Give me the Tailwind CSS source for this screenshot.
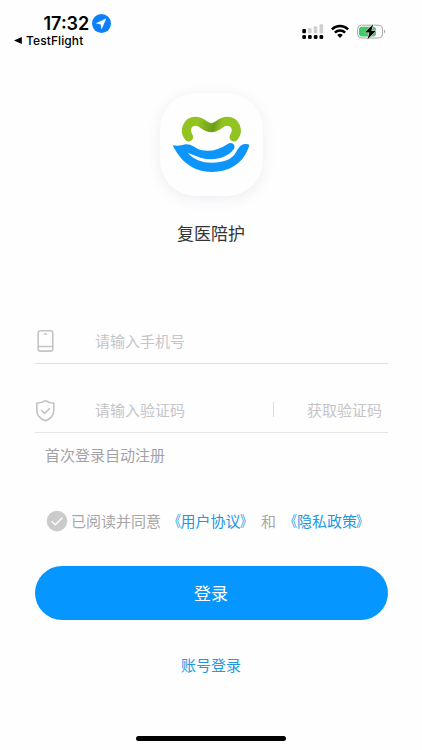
<!DOCTYPE html>
<html lang="zh-CN">
<head>
<meta charset="utf-8">
<meta name="viewport" content="width=device-width, initial-scale=1">
<title>复医陪护</title>
<script src="https://cdn.jsdelivr.net/npm/@tailwindcss/browser@4"></script>
</head>
<body class="bg-[#fefefe] font-['Noto_Sans_CJK_SC',sans-serif]">
<div class="w-[422px] h-[750px] flex flex-col overflow-hidden">
  <header class="h-[93px] shrink-0 flex justify-between items-start text-black font-['Inter',sans-serif]">
    <div class="pt-[13px] pl-[14px]">
      <div class="flex items-center gap-[3px] pl-[29.5px] h-[21px]">
        <span class="text-[18px] leading-[21px] font-semibold w-[45.5px] whitespace-nowrap">17:32</span>
        <svg class="size-[19px]" viewBox="0 0 19 19"><circle cx="9.5" cy="9.5" r="9.5" fill="#0c80fb"/><path d="M14 4.7 4.2 9.3l4.6.9.8 4.7z" fill="#fff" stroke="#fff" stroke-width=".3" stroke-linejoin="round"/></svg>
      </div>
      <div class="flex items-center gap-[4px] h-[13px]">
        <svg class="w-[8px] h-[7px]" viewBox="0 0 8 7"><path d="M0 3.5 7.8.1v6.8z"/></svg>
        <span class="text-[12px] leading-[13px] font-medium tracking-[0.1px]">TestFlight</span>
      </div>
    </div>
    <div class="flex pt-[24px] pr-[35px]">
      <svg class="w-[22px] h-[15px]" viewBox="0 0 22 15"><g fill="#d0d0d0"><rect x="6" y="4" width="3.6" height="5.5" rx="1"/><rect x="11.7" y="2.2" width="3.6" height="7.3" rx="1"/><rect x="17.5" y=".2" width="3.6" height="9.3" rx="1"/></g><rect x=".3" y="5" width="3.7" height="4.3" rx="1.1"/><rect x=".3" y="11" width="3.7" height="4" rx="1.3"/><rect x="6" y="11" width="3.7" height="4" rx="1.3"/><rect x="11.8" y="11" width="3.7" height="4" rx="1.3"/><rect x="17.5" y="11" width="3.7" height="4" rx="1.3"/></svg>
      <svg class="w-[18px] h-[14px] ml-[7px]" viewBox="0 0 18 14"><g fill="none" stroke="#000" stroke-width="2.5"><path d="M.9 5.3a11.6 11.6 0 0 1 16.2 0"/><path d="M3.9 8.6a7.3 7.3 0 0 1 10.2 0"/></g><path d="M9 13.9 6.2 11a4 4 0 0 1 5.6 0z"/></svg>
      <svg class="w-[30px] h-[16px] ml-[8px]" viewBox="0 0 30 16"><rect x=".6" y="1.2" width="25" height="12.8" rx="4" fill="#fff" stroke="#a7a7a7"/><path d="M5 2.7h11a3 3 0 0 1 3 3v3.8a3 3 0 0 1-3 3H5a3 3 0 0 1-3-3V5.7a3 3 0 0 1 3-3z" fill="#3fcc68"/><path d="M27 5.6q2.4 2 0 4z" fill="#a7a7a7"/><path d="M16.2.3 7.8 8.6h4.7l-2.1 7 8.6-8.9h-4.7z" stroke="#fff" stroke-width="1" paint-order="stroke"/></svg>
    </div>
  </header>

  <main class="flex flex-col px-[34.5px]">
    <div class="flex flex-col items-center">
      <div class="size-[103px] rounded-[36px] bg-[#fefefe] shadow-[0_3px_14px_rgba(50,70,110,0.09)]">
        <svg class="size-[103px]" viewBox="-15 -36 309 309" fill="none">
          <defs><linearGradient id="leaf" gradientUnits="userSpaceOnUse" x1="100" y1="45" x2="170" y2="62"><stop stop-color="#92c421"/><stop offset=".68" stop-color="#6c9c17"/><stop offset="1" stop-color="#92c421"/></linearGradient></defs>
          <path d="M71 96C56 77 67 49 92 49C113 49 118 68 139 68C160 68 165 49 186 49C212 49 222 77 207 96" stroke="url(#leaf)" stroke-width="27" stroke-linecap="round"/>
          <path d="M23 121Q42 124 62 118C80 117 88 128 104 134C132 142 160 136 188 117C201 108 215 122 206 133C192 152 165 164 134 163C108 161 88 151 68 143C85 163 110 173 140 173C175 173 200 165 213 142C222 125 230 117 240 117Q250 116 253 121C240 165 205 201 140 201C80 201 45 165 23 121Z" fill="#0d95fa"/>
        </svg>
      </div>
      <h1 class="mt-[24px] h-[26px] text-[17px] leading-[25px] text-[#333]">复医陪护</h1>
    </div>

    <div class="mt-[75px] h-[43px] border-b border-[#e0e0e2] flex items-start text-[15px] leading-[22px] text-[#c5c5c9]">
      <svg class="w-[21px] h-[24px] mt-[8px]" viewBox="0 0 21 24" fill="none" stroke="#c4c4c7" stroke-width="1.6"><rect x="3.2" y="1.7" width="14.6" height="20.4" rx="2.2"/><path d="M3.2 17.5h14.6M8.8 5h3.4"/></svg>
      <span class="ml-[39.5px] mt-[9px]">请输入手机号</span>
    </div>

    <div class="mt-[24px] h-[45px] border-b-[1.5px] border-[#e6e6e7] flex items-start text-[15px] leading-[22px] text-[#c5c5c9]">
      <svg class="w-[21px] h-[24px] mt-[11px]" viewBox="0 0 21 24" fill="none" stroke="#c2c2c5" stroke-width="1.6" stroke-linejoin="round"><path d="M10.4 1.6C7.7 3.4 5 4.2 1.8 4.3v7.2c0 5.2 3.1 8.2 8.6 10.2 5.4-2 8.4-5 8.4-10.2V4.3c-3.2-.1-5.8-.9-8.4-2.7Z"/><path d="m6.2 11 3.4 3.4 5.2-5.2"/></svg>
      <span class="ml-[39.5px] mt-[11px]">请输入验证码</span>
      <i class="ml-auto mt-[14px] w-px h-[15px] bg-[#dedee0]"></i>
      <span class="ml-[33px] mr-[5.5px] mt-[11px]">获取验证码</span>
    </div>
    <p class="mt-[11px] ml-[10.5px] text-[15px] leading-[22px] text-[#a2a2a6]">首次登录自动注册</p>

    <div class="mt-[44px] ml-[11.5px] h-[22px] flex items-center text-[15px] leading-[22px] text-[#a7a7a7] whitespace-nowrap">
      <svg class="size-[22px]" viewBox="0 0 22 22"><circle cx="11" cy="11" r="10.3" fill="#cbcbcc"/><path d="m5.6 11.2 3.7 3.5 7-7" fill="none" stroke="#fff" stroke-width="1.5"/></svg>
      <span class="ml-[3px]">已阅读并同意</span>
      <a class="ml-[4.5px] flex text-[#2398df]"><span class="origin-right scale-x-80">《</span>用户协议<span class="origin-left -translate-x-[1px] scale-x-80">》</span></a>
      <span class="ml-[5.5px]">和</span>
      <a class="ml-[6px] flex text-[#2398df]"><span class="origin-right scale-x-80">《</span>隐私政策<span class="origin-left -translate-x-[1px] scale-x-80">》</span></a>
    </div>

    <button class="mt-[34px] h-[54px] pb-[2px] rounded-full bg-[#0596ff] text-white text-[17px] leading-[25px]">登录</button>
    <a class="mt-[34px] self-center text-[15px] leading-[22px] text-[#2398df]">账号登录</a>
  </main>
  <div class="mt-auto mb-[9px] self-center w-[150px] h-[5px] rounded-full bg-black"></div>
</div>
</body>
</html>
